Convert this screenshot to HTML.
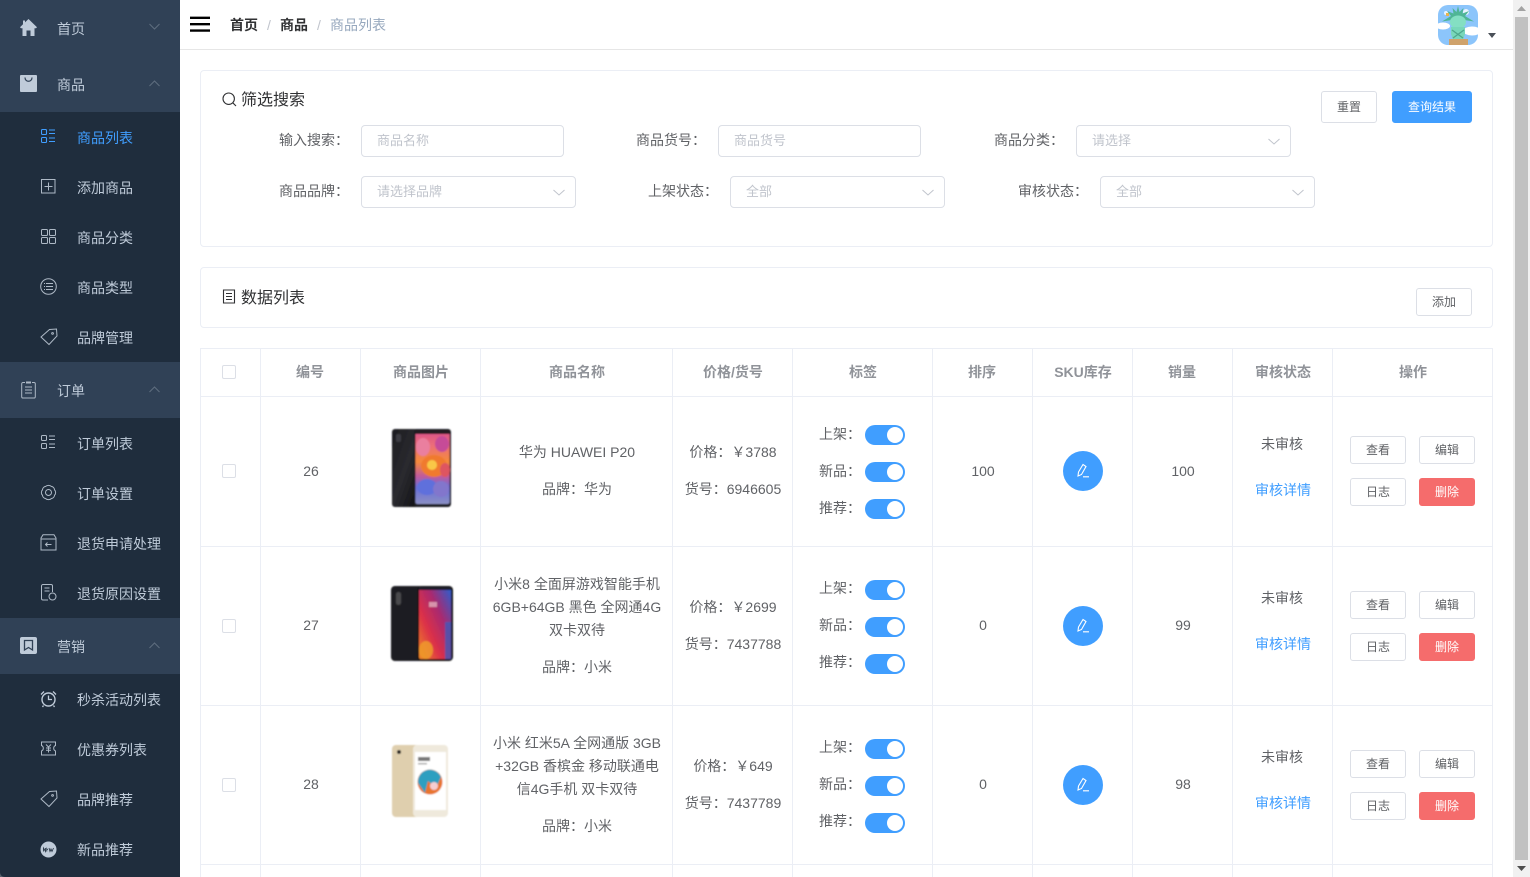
<!DOCTYPE html>
<html lang="zh-CN"><head><meta charset="utf-8"><title>商品列表</title>
<style>
html,body{margin:0;padding:0;width:1530px;height:877px;overflow:hidden;background:#fff}
body{font-family:"Liberation Sans","Noto Sans CJK SC",sans-serif;font-size:14px;color:#606266;position:relative}
.a,.t,.b,svg.i{position:absolute}
.t{white-space:nowrap;line-height:20px;height:20px}
.c{text-align:center;transform:translateX(1px)}
#side{position:absolute;left:0;top:0;width:180px;height:877px;background:#1f2d3d;overflow:hidden}
.m{position:absolute;left:0;width:180px;height:56px;background:#304156}
.st{position:absolute;left:57px;color:#bfcbd9;white-space:nowrap;line-height:20px}
.ss{position:absolute;left:77px;color:#bfcbd9;white-space:nowrap;line-height:20px}
.box{position:absolute;box-sizing:border-box;border:1px solid #dcdfe6;border-radius:4px;background:#fff;height:32px;line-height:30px;padding-left:15px;color:#c0c4cc;font-size:13px}
.lb{position:absolute;white-space:nowrap;line-height:20px;color:#606266}
.card{position:absolute;left:200px;width:1293px;box-sizing:border-box;border:1px solid #ebeef5;border-radius:4px}
.b{box-sizing:border-box;border:1px solid #dcdfe6;border-radius:3px;background:#fff;text-align:center;font-size:12px;color:#606266;height:28px;line-height:26px;width:56px}
.r{background:#f56c6c;border-color:#f56c6c;color:#fff}
.h{position:absolute;top:362px;height:20px;line-height:20px;font-weight:700;color:#909399;text-align:center;white-space:nowrap;transform:translateX(1px)}
.v{position:absolute;top:348px;width:1px;height:529px;background:#ebeef5}
.l{position:absolute;left:200px;width:1293px;height:1px;background:#ebeef5}
.sw{position:absolute;left:865px;width:40px;height:20px;border-radius:10px;background:#409eff}
.sw:after{content:"";position:absolute;left:22px;top:2px;width:16px;height:16px;border-radius:50%;background:#fff}
.cb{position:absolute;left:222px;width:14px;height:14px;box-sizing:border-box;border:1px solid #dcdfe6;border-radius:2px;background:#fff}
.ci{position:absolute;left:1063px;width:40px;height:40px;border-radius:50%;background:#409eff}
.ci svg{position:absolute;left:12px;top:12px}
.lk{color:#409eff}
.f{fill:none;stroke:#aeb9c6;stroke-width:1}
</style></head><body>

<div id="side">
<div class="m" style="top:0"></div>
<div class="m" style="top:56px"></div>
<div class="m" style="top:362px"></div>
<div class="m" style="top:618px"></div>

<svg class="i" style="left:20px;top:19px" width="17" height="17" viewBox="0 0 17 17"><path d="M8.500 0L17 8.200 16 9.200H14.500V17H10.500V11.500H6.500V17H2.500V9.200H1L0 8.200 3 5.300V1.500H5V3.400z" fill="#bfcbd9"/></svg>
<div class="st" style="top:19px">首页</div>
<svg class="i" style="left:149px;top:23px" width="11" height="7" viewBox="0 0 11 7"><path d="M.5 1L5.500 6 10.500 1" fill="none" stroke="#5f6e7f"/></svg>

<svg class="i" style="left:20px;top:75px" width="17" height="17" viewBox="0 0 17 17"><path d="M1 0H16A1 1 0 0 1 17 1V16A1 1 0 0 1 16 17H1A1 1 0 0 1 0 16V1A1 1 0 0 1 1 0Z" fill="#bfcbd9"/><path d="M5 2.500C5 7.500 12 7.500 12 2.500" fill="none" stroke="#304156" stroke-width="1.200"/></svg>
<div class="st" style="top:75px">商品</div>
<svg class="i" style="left:149px;top:80px" width="11" height="7" viewBox="0 0 11 7"><path d="M.5 6L5.500 1 10.500 6" fill="none" stroke="#5f6e7f"/></svg>

<svg class="i" style="left:41px;top:129px" width="15" height="15" viewBox="0 0 15 15"><g fill="none" stroke="#409eff" stroke-width="1.100"><rect x=".5" y=".5" width="5" height="5" rx="1"/><rect x=".5" y="8.500" width="5" height="5" rx="1"/><path d="M8 1H14M8 4.500H14M8 9H14M8 12.500H14"/></g></svg>
<div class="ss" style="top:128px;color:#409eff">商品列表</div>

<svg class="i" style="left:41px;top:179px" width="15" height="15" viewBox="0 0 15 15"><path class="f" d="M.5.5H14V14H.5zM3.500 7.500H11.500M7.500 3.500V11.500"/></svg>
<div class="ss" style="top:178px">添加商品</div>

<svg class="i" style="left:41px;top:229px" width="15" height="15" viewBox="0 0 15 15"><g class="f"><rect x=".5" y=".5" width="6" height="6" rx="1"/><rect x="8.500" y=".5" width="6" height="6" rx="1"/><rect x=".5" y="8.500" width="6" height="6" rx="1"/><rect x="8.500" y="8.500" width="6" height="6" rx="1"/></g></svg>
<div class="ss" style="top:228px">商品分类</div>

<svg class="i" style="left:40px;top:278px" width="17" height="17" viewBox="0 0 17 17"><circle class="f" cx="8.500" cy="8.500" r="7.800"/><path class="f" d="M6 5.500H13M6 8.500H13M6 11.500H13M4 5.500H5M4 8.500H5M4 11.500H5"/></svg>
<div class="ss" style="top:278px">商品类型</div>

<svg class="i" style="left:40px;top:328px" width="18" height="18" viewBox="0 0 18 18"><path class="f" d="M1 9L9.500 1.500 16.500 1 17 8 9 16.500zM12.500 4.500a.9.9 0 1 0 .1 0"/></svg>
<div class="ss" style="top:328px">品牌管理</div>

<svg class="i" style="left:21px;top:381px" width="15" height="18" viewBox="0 0 15 18"><path class="f" d="M4 1.500H2A1.300 1.300 0 0 0 .7 2.800V15.700A1.300 1.300 0 0 0 2 17H13A1.300 1.300 0 0 0 14.300 15.700V2.800A1.300 1.300 0 0 0 13 1.500H11M4 6H11M4 9H11M4 12H11"/><rect x="5" y=".5" width="5" height="2" fill="#aeb9c6"/></svg>
<div class="st" style="top:381px">订单</div>
<svg class="i" style="left:149px;top:386px" width="11" height="7" viewBox="0 0 11 7"><path d="M.5 6L5.500 1 10.500 6" fill="none" stroke="#5f6e7f"/></svg>

<svg class="i" style="left:41px;top:435px" width="15" height="15" viewBox="0 0 15 15"><g class="f"><rect x=".5" y=".5" width="5" height="5" rx="1"/><rect x=".5" y="8.500" width="5" height="5" rx="1"/><path d="M8 1H14M8 4.500H14M8 9H14M8 12.500H14"/></g></svg>
<div class="ss" style="top:434px">订单列表</div>

<svg class="i" style="left:40px;top:484px" width="17" height="17" viewBox="0 0 17 17"><path class="f" d="M5.500 2.500C7 1 10 1 11.500 2.500 13 2.500 14.500 4.200 14.500 5.800 16 7 16 10 14.500 11.200 14.500 12.800 13 14.500 11.500 14.500 10 16 7 16 5.500 14.500 4 14.500 2.500 12.800 2.500 11.200 1 10 1 7 2.500 5.800 2.500 4.200 4 2.500 5.500 2.500z"/><circle class="f" cx="8.500" cy="8.500" r="3"/></svg>
<div class="ss" style="top:484px">订单设置</div>

<svg class="i" style="left:40px;top:534px" width="17" height="17" viewBox="0 0 17 17"><path class="f" d="M3 .8H14L16 4V16H1V4zM1 5H16M11.500 10.500H5.500M7.500 8.500L5.500 10.500 7.500 12.500"/></svg>
<div class="ss" style="top:534px">退货申请处理</div>

<svg class="i" style="left:41px;top:584px" width="16" height="17" viewBox="0 0 16 17"><path class="f" d="M7 16H2A1.500 1.500 0 0 1 .5 14.500V2A1.500 1.500 0 0 1 2 .5H10A1.500 1.500 0 0 1 11.500 2V8M3.500 4H8.500M3.500 7H8.500"/><circle class="f" cx="11.500" cy="12.500" r="3.500"/></svg>
<div class="ss" style="top:584px">退货原因设置</div>

<svg class="i" style="left:20px;top:637px" width="17" height="17" viewBox="0 0 17 17"><rect width="17" height="17" rx="2" fill="#bfcbd9"/><path d="M4.500 3.500H12.500V13L8.500 10.500 4.500 13z" fill="none" stroke="#304156" stroke-width="1.300"/></svg>
<div class="st" style="top:637px">营销</div>
<svg class="i" style="left:149px;top:642px" width="11" height="7" viewBox="0 0 11 7"><path d="M.5 6L5.500 1 10.500 6" fill="none" stroke="#5f6e7f"/></svg>

<svg class="i" style="left:40px;top:690px" width="17" height="18" viewBox="0 0 17 18"><circle class="f" cx="8.500" cy="9.500" r="6.500" style="stroke-width:1.400;stroke:#bfcbd9"/><path class="f" d="M8.500 5.500V9.500H12M1 4.500L4 1.500M16 4.500L13 1.500M3.500 15.500L2.500 17M13.500 15.500L14.500 17" style="stroke-width:1.300;stroke:#bfcbd9"/></svg>
<div class="ss" style="top:690px">秒杀活动列表</div>

<svg class="i" style="left:41px;top:741px" width="15" height="15" viewBox="0 0 15 15"><path class="f" d="M.5 1H14.500V4.500A3 3 0 0 0 14.500 10V14H.5V10A3 3 0 0 0 .5 4.500zM5 3.500L7.500 6 10 3.500M7.500 6V11.500M5 7H10M5 9.300H10"/></svg>
<div class="ss" style="top:740px">优惠券列表</div>

<svg class="i" style="left:40px;top:790px" width="18" height="18" viewBox="0 0 18 18"><path class="f" d="M1 9L9.500 1.500 16.500 1 17 8 9 16.500zM12.500 4.500a.9.9 0 1 0 .1 0"/></svg>
<div class="ss" style="top:790px">品牌推荐</div>

<svg class="i" style="left:40px;top:841px" width="17" height="17" viewBox="0 0 17 17"><circle cx="8.500" cy="8.500" r="8" fill="#bfcbd9"/><path d="M3.500 10.500V7L5.500 10.500V7M7 7H6.800V10.500M7 8.500H8M9 7L10 10.500 11 8 12 10.500 13.500 7" fill="none" stroke="#1f2d3d" stroke-width=".8"/></svg>
<div class="ss" style="top:840px">新品推荐</div>
<svg class="i" style="left:0;top:872px" width="5" height="5" viewBox="0 0 5 5"><path d="M0 0C0 3 2 5 5 5H0z" fill="#56616d"/></svg>
</div>

<!-- top bar -->
<div class="a" style="left:180px;top:49px;width:1333px;height:1px;background:#e6e6e6"></div>
<svg class="i" style="left:190px;top:16px" width="20" height="16" viewBox="0 0 20 16"><path d="M0 1.800H20M0 8.200H20M0 14.600H20" stroke="#000" stroke-width="2.400"/></svg>
<div class="t" style="left:230px;top:15px;font-weight:700;color:#303133">首页</div>
<div class="t" style="left:267px;top:15px;color:#c0c4cc">/</div>
<div class="t" style="left:280px;top:15px;font-weight:700;color:#303133">商品</div>
<div class="t" style="left:317px;top:15px;color:#c0c4cc">/</div>
<div class="t" style="left:330px;top:15px;color:#97a8be">商品列表</div>

<svg class="i" style="left:1438px;top:5px" width="40" height="40" viewBox="0 0 40 40">
<defs><clipPath id="av"><rect width="40" height="40" rx="10"/></clipPath></defs>
<g clip-path="url(#av)"><rect width="40" height="40" fill="#8cc5fb"/>
<ellipse cx="5" cy="21" rx="7" ry="3.500" fill="#fff"/><ellipse cx="34" cy="26" rx="9" ry="4.500" fill="#fff"/><circle cx="28" cy="7" r="3" fill="#eaf4ff"/><circle cx="8" cy="8" r="2" fill="#eaf4ff"/><rect x="8" y="8" width="3" height="3" fill="#e8b44f"/>
<path d="M20 1L21.500 7 25.500 3 24.500 8.500 31 6 27 11 36 16.500 26 15H14L4 16.500 13 11 9 6 15.500 8.500 14.500 3 18.500 7z" fill="#4fb596"/>
<ellipse cx="20" cy="17" rx="8" ry="6.500" fill="#84dfc3"/>
<path d="M13 22H27L27 29 25 35H15L13 29z" fill="#78d7ba"/>
<path d="M14 25L25 33M26 25L15 33" stroke="#4ea88c" stroke-width="1.300"/>
<rect x="11" y="34" width="19" height="6" fill="#cfa26b"/></g></svg>
<svg class="i" style="left:1488px;top:33px" width="8" height="5" viewBox="0 0 8 5"><path d="M0 0H8L4 5z" fill="#4a5058"/></svg>

<!-- filter card -->
<div class="card" style="top:70px;height:177px"></div>
<svg class="i" style="left:222px;top:92px" width="15" height="15" viewBox="0 0 15 15"><circle cx="6.700" cy="6.700" r="5.700" fill="none" stroke="#303133" stroke-width="1.100"/><path d="M10.800 10.800L14 14" stroke="#303133" stroke-width="1.100"/></svg>
<div class="t" style="left:241px;top:91px;font-size:16px;color:#303133;line-height:20px">筛选搜索</div>

<div class="lb" style="left:279px;top:130px">输入搜索：</div>
<div class="box" style="left:361px;top:125px;width:203px">商品名称</div>
<div class="lb" style="left:636px;top:130px">商品货号：</div>
<div class="box" style="left:718px;top:125px;width:203px">商品货号</div>
<div class="lb" style="left:994px;top:130px">商品分类：</div>
<div class="box" style="left:1076px;top:125px;width:215px">请选择</div>
<div class="lb" style="left:279px;top:181px">商品品牌：</div>
<div class="box" style="left:361px;top:176px;width:215px">请选择品牌</div>
<div class="lb" style="left:648px;top:181px">上架状态：</div>
<div class="box" style="left:730px;top:176px;width:215px">全部</div>
<div class="lb" style="left:1018px;top:181px">审核状态：</div>
<div class="box" style="left:1100px;top:176px;width:215px">全部</div>
<svg class="i" style="left:1268px;top:138px" width="12" height="7" viewBox="0 0 12 7"><path d="M.5 1L6 6 11.500 1" fill="none" stroke="#c0c4cc"/></svg>
<svg class="i" style="left:553px;top:189px" width="12" height="7" viewBox="0 0 12 7"><path d="M.5 1L6 6 11.500 1" fill="none" stroke="#c0c4cc"/></svg>
<svg class="i" style="left:922px;top:189px" width="12" height="7" viewBox="0 0 12 7"><path d="M.5 1L6 6 11.500 1" fill="none" stroke="#c0c4cc"/></svg>
<svg class="i" style="left:1292px;top:189px" width="12" height="7" viewBox="0 0 12 7"><path d="M.5 1L6 6 11.500 1" fill="none" stroke="#c0c4cc"/></svg>

<div class="b" style="left:1321px;top:91px;height:32px;line-height:30px">重置</div>
<div class="b" style="left:1392px;top:91px;width:80px;height:32px;line-height:30px;background:#409eff;border-color:#409eff;color:#fff">查询结果</div>

<!-- data list card -->
<div class="card" style="top:267px;height:61px"></div>
<svg class="i" style="left:222px;top:289px" width="14" height="15" viewBox="0 0 14 15"><path d="M1.500 1H12.500V14H1.500zM4 4.500H10M4 7.500H10M4 10.500H10" fill="none" stroke="#303133" stroke-width="1.100"/></svg>
<div class="t" style="left:241px;top:289px;font-size:16px;color:#303133">数据列表</div>
<div class="b" style="left:1416px;top:288px">添加</div>

<!-- table lines -->
<div class="l" style="top:348px"></div><div class="l" style="top:396px"></div><div class="l" style="top:546px"></div><div class="l" style="top:705px"></div><div class="l" style="top:864px"></div>
<div class="v" style="left:200px"></div><div class="v" style="left:260px"></div><div class="v" style="left:360px"></div><div class="v" style="left:480px"></div><div class="v" style="left:672px"></div><div class="v" style="left:792px"></div><div class="v" style="left:932px"></div><div class="v" style="left:1032px"></div><div class="v" style="left:1132px"></div><div class="v" style="left:1232px"></div><div class="v" style="left:1332px"></div><div class="v" style="left:1492px"></div>

<!-- header -->
<div class="cb" style="top:365px"></div>
<div class="h" style="left:259px;width:100px">编号</div>
<div class="h" style="left:360px;width:120px">商品图片</div>
<div class="h" style="left:480px;width:192px">商品名称</div>
<div class="h" style="left:672px;width:120px">价格/货号</div>
<div class="h" style="left:792px;width:140px">标签</div>
<div class="h" style="left:931px;width:100px">排序</div>
<div class="h" style="left:1032px;width:100px">SKU库存</div>
<div class="h" style="left:1131px;width:100px">销量</div>
<div class="h" style="left:1232px;width:100px">审核状态</div>
<div class="h" style="left:1332px;width:160px">操作</div>

<!-- row 1 -->
<div class="cb" style="top:464px"></div>
<div class="t c" style="left:260px;width:100px;top:461px">26</div>
<svg class="i" style="left:385px;top:424px" width="74" height="88" viewBox="0 0 74 88">
<defs><filter id="bl" x="-20%" y="-20%" width="140%" height="140%"><feGaussianBlur stdDeviation=".8"/></filter>
<linearGradient id="p1" x1="0" y1="0" x2="0" y2="1"><stop offset="0" stop-color="#d9508a"/><stop offset=".2" stop-color="#ec6f78"/><stop offset=".42" stop-color="#f58a3a"/><stop offset=".62" stop-color="#c05a9c"/><stop offset=".78" stop-color="#6a70d6"/><stop offset="1" stop-color="#8a8fc4"/></linearGradient>
<linearGradient id="b1" x1="0" y1="0" x2="1" y2="1"><stop offset="0" stop-color="#1c1c20"/><stop offset=".5" stop-color="#2a2a2f"/><stop offset="1" stop-color="#0e0e10"/></linearGradient></defs>
<g filter="url(#bl)"><rect x="7" y="5" width="28" height="78" rx="3" fill="url(#b1)"/><rect x="29" y="5" width="37" height="78" rx="3" fill="#1f1e23"/><rect x="30.500" y="7" width="34" height="73" rx="2" fill="url(#p1)"/><rect x="30.500" y="6" width="34" height="4" fill="#241c24"/><ellipse cx="38" cy="23" rx="7" ry="9" fill="#ea7f9f"/><ellipse cx="57" cy="20" rx="7" ry="8" fill="#c64c98"/><ellipse cx="49" cy="42" rx="13" ry="11" fill="#f07a2e"/><ellipse cx="47" cy="41" rx="5" ry="5" fill="#f9c746"/><ellipse cx="60" cy="46" rx="5" ry="7" fill="#de5560"/><ellipse cx="42" cy="63" rx="10" ry="8" fill="#5f6fdc"/><ellipse cx="56" cy="65" rx="8" ry="8" fill="#8276cc"/><rect x="11" y="10" width="5" height="8" rx="2" fill="#3a3a42"/></g></svg>
<div class="t c" style="left:480px;width:192px;top:442px">华为 HUAWEI P20</div>
<div class="t c" style="left:480px;width:192px;top:479px">品牌：华为</div>
<div class="t c" style="left:672px;width:120px;top:442px">价格：￥3788</div>
<div class="t c" style="left:672px;width:120px;top:479px">货号：6946605</div>
<div class="t" style="left:819px;top:424px">上架：</div><div class="sw" style="top:425px"></div>
<div class="t" style="left:819px;top:461px">新品：</div><div class="sw" style="top:462px"></div>
<div class="t" style="left:819px;top:498px">推荐：</div><div class="sw" style="top:499px"></div>
<div class="t c" style="left:932px;width:100px;top:461px">100</div>
<div class="ci" style="top:451px"><svg width="16" height="16" viewBox="0 0 16 16"><path d="M8 1.500L11 3.500 6.500 11.500 3 13 3.500 9zM8 13.800H14" fill="none" stroke="#fff" stroke-width="1.100"/></svg></div>
<div class="t c" style="left:1132px;width:100px;top:461px">100</div>
<div class="t c" style="left:1231px;width:100px;top:434px">未审核</div>
<div class="t c lk" style="left:1232px;width:100px;top:480px">审核详情</div>
<div class="b" style="left:1350px;top:436px">查看</div><div class="b" style="left:1419px;top:436px">编辑</div>
<div class="b" style="left:1350px;top:478px">日志</div><div class="b r" style="left:1419px;top:478px">删除</div>

<!-- row 2 -->
<div class="cb" style="top:619px"></div>
<div class="t c" style="left:260px;width:100px;top:615px">27</div>
<svg class="i" style="left:385px;top:580px" width="74" height="88" viewBox="0 0 74 88">
<defs><linearGradient id="p2" x1="0" y1="1" x2="1" y2="0"><stop offset="0" stop-color="#f08a25"/><stop offset=".35" stop-color="#dc3048"/><stop offset=".65" stop-color="#a82a70"/><stop offset="1" stop-color="#2a5fd0"/></linearGradient></defs>
<g filter="url(#bl)"><rect x="6" y="6" width="32" height="75" rx="4" fill="#1e1e21"/><rect x="32" y="6" width="36" height="75" rx="4" fill="#141416"/><rect x="34" y="8" width="32" height="71" rx="2" fill="url(#p2)"/><rect x="34" y="7" width="32" height="3" fill="#1a1a2a"/><rect x="60" y="42" width="6" height="37" fill="#3560c0" opacity=".7"/><rect x="11" y="12" width="5" height="13" rx="2.500" fill="#48484d"/><ellipse cx="41" cy="70" rx="7" ry="9" fill="#ef9a2c" opacity=".85"/><rect x="44" y="22" width="8" height="5" fill="#e8c0c8" opacity=".7"/></g></svg>
<div class="t c" style="left:480px;width:192px;top:574px">小米8 全面屏游戏智能手机</div>
<div class="t c" style="left:480px;width:192px;top:597px">6GB+64GB 黑色 全网通4G</div>
<div class="t c" style="left:480px;width:192px;top:620px">双卡双待</div>
<div class="t c" style="left:480px;width:192px;top:657px">品牌：小米</div>
<div class="t c" style="left:672px;width:120px;top:597px">价格：￥2699</div>
<div class="t c" style="left:672px;width:120px;top:634px">货号：7437788</div>
<div class="t" style="left:819px;top:578px">上架：</div><div class="sw" style="top:580px"></div>
<div class="t" style="left:819px;top:615px">新品：</div><div class="sw" style="top:617px"></div>
<div class="t" style="left:819px;top:652px">推荐：</div><div class="sw" style="top:654px"></div>
<div class="t c" style="left:932px;width:100px;top:615px">0</div>
<div class="ci" style="top:606px"><svg width="16" height="16" viewBox="0 0 16 16"><path d="M8 1.500L11 3.500 6.500 11.500 3 13 3.500 9zM8 13.800H14" fill="none" stroke="#fff" stroke-width="1.100"/></svg></div>
<div class="t c" style="left:1132px;width:100px;top:615px">99</div>
<div class="t c" style="left:1231px;width:100px;top:588px">未审核</div>
<div class="t c lk" style="left:1232px;width:100px;top:634px">审核详情</div>
<div class="b" style="left:1350px;top:591px">查看</div><div class="b" style="left:1419px;top:591px">编辑</div>
<div class="b" style="left:1350px;top:633px">日志</div><div class="b r" style="left:1419px;top:633px">删除</div>

<!-- row 3 -->
<div class="cb" style="top:778px"></div>
<div class="t c" style="left:260px;width:100px;top:774px">28</div>
<svg class="i" style="left:385px;top:739px" width="74" height="84" viewBox="0 0 74 84">
<g filter="url(#bl)"><rect x="7" y="6" width="32" height="72" rx="4" fill="#dfcfae"/><circle cx="14" cy="13" r="2" fill="#222"/><rect x="28" y="6" width="35" height="72" rx="4" fill="#efe9dc"/><rect x="30" y="13" width="31" height="58" fill="#fff"/><circle cx="45" cy="43" r="12.500" fill="#e8742e"/><path d="M33 44A12 12 0 0 1 56 38L51 49 43 42 40 54z" fill="#2f9fc0"/><circle cx="49" cy="47" r="4" fill="#f6cdd0"/><rect x="33" y="18" width="12" height="4" fill="#777"/><rect x="33" y="24" width="9" height="1.500" fill="#aaa"/></g></svg>
<div class="t c" style="left:480px;width:192px;top:733px">小米 红米5A 全网通版 3GB</div>
<div class="t c" style="left:480px;width:192px;top:756px">+32GB 香槟金 移动联通电</div>
<div class="t c" style="left:480px;width:192px;top:779px">信4G手机 双卡双待</div>
<div class="t c" style="left:480px;width:192px;top:816px">品牌：小米</div>
<div class="t c" style="left:672px;width:120px;top:756px">价格：￥649</div>
<div class="t c" style="left:672px;width:120px;top:793px">货号：7437789</div>
<div class="t" style="left:819px;top:737px">上架：</div><div class="sw" style="top:739px"></div>
<div class="t" style="left:819px;top:774px">新品：</div><div class="sw" style="top:776px"></div>
<div class="t" style="left:819px;top:811px">推荐：</div><div class="sw" style="top:813px"></div>
<div class="t c" style="left:932px;width:100px;top:774px">0</div>
<div class="ci" style="top:765px"><svg width="16" height="16" viewBox="0 0 16 16"><path d="M8 1.500L11 3.500 6.500 11.500 3 13 3.500 9zM8 13.800H14" fill="none" stroke="#fff" stroke-width="1.100"/></svg></div>
<div class="t c" style="left:1132px;width:100px;top:774px">98</div>
<div class="t c" style="left:1231px;width:100px;top:747px">未审核</div>
<div class="t c lk" style="left:1232px;width:100px;top:793px">审核详情</div>
<div class="b" style="left:1350px;top:750px">查看</div><div class="b" style="left:1419px;top:750px">编辑</div>
<div class="b" style="left:1350px;top:792px">日志</div><div class="b r" style="left:1419px;top:792px">删除</div>

<!-- scrollbar -->
<div class="a" style="left:1513px;top:0;width:17px;height:877px;background:#f1f1f1"></div>
<div class="a" style="left:1515px;top:17px;width:13px;height:843px;background:#c1c1c1"></div>
<svg class="i" style="left:1517px;top:6px" width="9" height="5" viewBox="0 0 9 5"><path d="M4.500 0L9 5H0z" fill="#a3a3a3"/></svg>
<svg class="i" style="left:1517px;top:866px" width="9" height="5" viewBox="0 0 9 5"><path d="M4.500 5L9 0H0z" fill="#505050"/></svg>
</body></html>
